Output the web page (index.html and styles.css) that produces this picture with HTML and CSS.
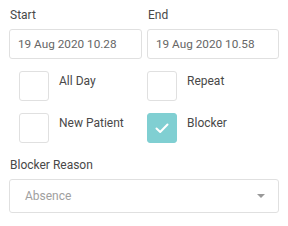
FILE: index.html
```html
<!DOCTYPE html>
<html lang="en">
<head>
<meta charset="utf-8">
<title>Appointment</title>
<link rel="stylesheet" href="styles.css">
</head>
<body>
<form class="apptForm">
  <!-- Start / end times -->
  <div class="timeRow">
    <div class="field">
      <label class="fieldLabel" for="start">Start</label>
      <input type="text" class="textInput" id="start" value="19 Aug 2020 10.28">
    </div>
    <div class="field">
      <label class="fieldLabel" for="end">End</label>
      <input type="text" class="textInput" id="end" value="19 Aug 2020 10.58">
    </div>
  </div>
  <!-- Flags -->
  <div class="checkGrid">
    <label class="checkItem"><span class="box"></span><span class="checkText">All Day</span></label>
    <label class="checkItem"><span class="box"></span><span class="checkText">Repeat</span></label>
    <label class="checkItem"><span class="box"></span><span class="checkText">New Patient</span></label>
    <label class="checkItem"><span class="box checked">
      <svg width="16" height="16" viewBox="0 0 16 16"><path d="M2.5 8.5 L6.2 12 L13.5 4.5" fill="none" stroke="#fff" stroke-width="2" stroke-linecap="round" stroke-linejoin="round"/></svg>
    </span><span class="checkText">Blocker</span></label>
  </div>
  <div class="field">
    <label class="fieldLabel" for="reason">Blocker Reason</label>
    <div class="selectBox" id="reason">
      <span class="selectText">Absence</span>
      <span class="caret"></span>
    </div>
  </div>
</form>
</body>
</html>
```

FILE: styles.css
```css
body {
  margin: 0;
  background-color: #fff;
  font-family: Roboto, "Liberation Sans", sans-serif;
}
.apptForm {
  width: 270px;
  padding: 7px 9px;
}
.timeRow {
  display: grid;
  grid-template-columns: 133px 132px;
  column-gap: 5px;
}
.field {
  display: flex;
  flex-direction: column;
}
.fieldLabel {
  font-size: 12px;
  color: #484848;
  line-height: 16px;
  padding-left: 1px;
  margin-bottom: 6px;
}
.textInput {
  box-sizing: border-box;
  height: 30px;
  width: 100%;
  border: 1px solid #e0e0e0;
  border-radius: 3px;
  padding: 0 8px;
  font-family: inherit;
  font-size: 11.75px;
  color: #666;
  outline: none;
}
.checkGrid {
  display: grid;
  grid-template-columns: 128px 128px;
  row-gap: 12px;
  padding: 12px 0 0 10px;
  margin-bottom: 14px;
}
.checkItem {
  display: flex;
  align-items: flex-start;
  gap: 10px;
  font-size: 12px;
  color: #484848;
}
.checkText {
  line-height: 16px;
  padding-top: 2px;
}
.box {
  box-sizing: border-box;
  width: 30px;
  height: 30px;
  border: 1px solid #e0e0e0;
  border-radius: 3px;
  display: flex;
  align-items: center;
  justify-content: center;
}
.box.checked {
  background-color: #80cfd2;
  border-color: #80cfd2;
}
.selectBox {
  box-sizing: border-box;
  height: 34px;
  border: 1px solid #e0e0e0;
  border-radius: 3px;
  display: flex;
  align-items: center;
  justify-content: space-between;
  padding: 0 13px 0 15px;
}
.selectText {
  font-size: 12px;
  color: #a0a0a0;
}
.caret {
  width: 0;
  height: 0;
  border-left: 4px solid transparent;
  border-right: 4px solid transparent;
  border-top: 4px solid #999;
}
```
